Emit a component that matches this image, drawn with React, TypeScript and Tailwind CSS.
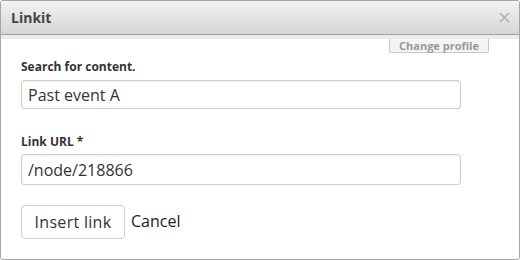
export default function App() {
  return (
    <div
      className="w-[520px] h-[260px] bg-white border border-[#a6a6a6] rounded-[3px] overflow-hidden flex flex-col"
      style={{ fontFamily: '"Open Sans", "DejaVu Sans", sans-serif' }}
    >
      {/* Title bar */}
      <div className="h-[34px] shrink-0 flex items-center justify-between pl-[10px] pr-[9px] bg-gradient-to-b from-[#f2f2f2] to-[#d6d6d6] border-b border-[#a0a0a0]">
        <span className="text-[14px] font-bold text-[#444]">Linkit</span>
        <svg width="11" height="11" viewBox="0 0 11 11" className="mt-[-1px]">
          <path d="M1 1 L10 10 M10 1 L1 10" stroke="#b0b0b0" strokeWidth="1.6" />
        </svg>
      </div>
      <div className="h-[4px] shrink-0 bg-[#ebebeb]" />

      {/* Profile tab */}
      <div className="flex justify-end pr-[30px]">
        <div className="w-[100px] h-[14px] border border-t-0 border-[#c8c8c8] bg-[#f4f4f4] rounded-b-[2px] flex items-center justify-center text-[11px] font-bold text-[#999] leading-none">
          Change profile
        </div>
      </div>

      {/* Form */}
      <div className="px-[20px] flex flex-col">
        <label className="mt-[7px] text-[12px] font-bold text-[#333] leading-[14px]">
          Search for content.
        </label>
        <div className="mt-[6px] w-[440px] h-[29px] border border-[#cfcfcf] rounded-[3px] shadow-[inset_0_1px_2px_rgba(0,0,0,0.08)] flex items-center px-[6px] text-[16px] text-[#333]">
          Past event A
        </div>
        <label className="mt-[26px] text-[12px] font-bold text-[#333] leading-[14px]">
          Link URL *
        </label>
        <div className="mt-[5px] w-[440px] h-[31px] border border-[#cfcfcf] rounded-[3px] shadow-[inset_0_1px_2px_rgba(0,0,0,0.08)] flex items-center px-[6px] text-[16px] text-[#333]">
          /node/218866
        </div>
        <div className="mt-[20px] flex items-center gap-[6px]">
          <div className="w-[104px] h-[34px] border border-[#cfcfcf] rounded-[4px] flex items-center justify-center text-[16px] tracking-[0.3px] text-[#333] bg-white">
            Insert link
          </div>
          <span className="text-[16px] text-[#222] mt-[-2px]">Cancel</span>
        </div>
      </div>
    </div>
  );
}
